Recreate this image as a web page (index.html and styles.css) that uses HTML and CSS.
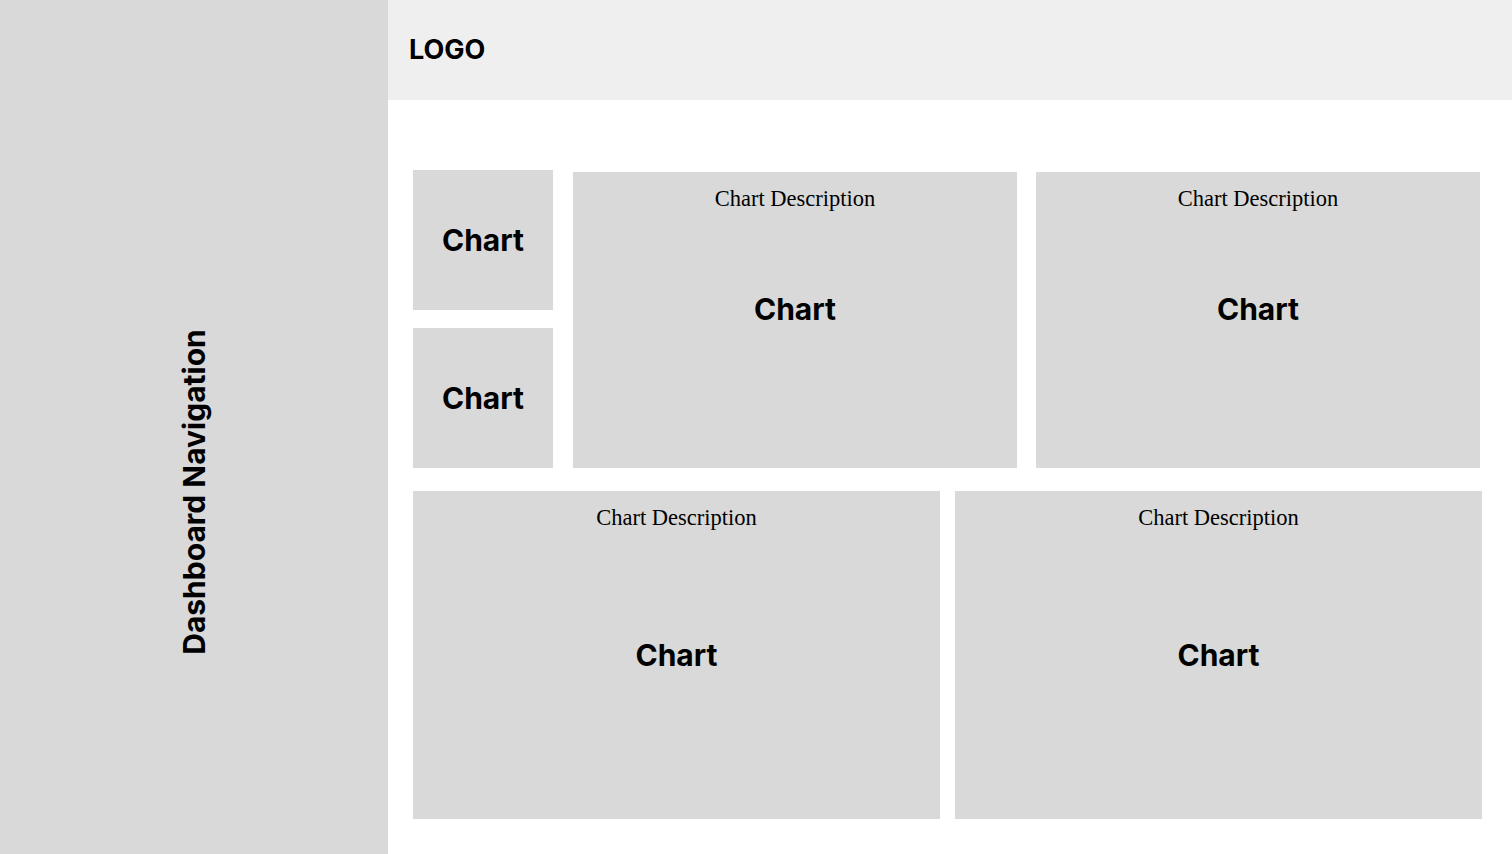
FILE: index.html
```html
<!DOCTYPE html>
<html lang="en">
<head>
    <meta charset="UTF-8">
    <meta name="viewport" content="width=device-width, initial-scale=1.0">
    <title>Dashboard</title>
    <link rel="stylesheet" href="styles.css">
</head>
<body>
    <div class="page">
        <aside class="sidebar">
            <span class="nav-label">Dashboard Navigation</span>
        </aside>
        <div class="main">
            <header class="topbar">
                <div class="logo">LOGO</div>
            </header>
            <section class="content">
                <div class="row-top">
                    <div class="small-col">
                        <div class="card card-small"><span class="chart-label">Chart</span></div>
                        <div class="card card-small"><span class="chart-label">Chart</span></div>
                    </div>
                    <div class="card card-wide card-lift">
                        <span class="chart-desc">Chart Description</span>
                        <span class="chart-label">Chart</span>
                    </div>
                    <div class="card card-wide card-lift card-gap">
                        <span class="chart-desc">Chart Description</span>
                        <span class="chart-label">Chart</span>
                    </div>
                </div>
                <div class="row-bottom">
                    <div class="card card-half">
                        <span class="chart-desc">Chart Description</span>
                        <span class="chart-label">Chart</span>
                    </div>
                    <div class="card card-half">
                        <span class="chart-desc">Chart Description</span>
                        <span class="chart-label">Chart</span>
                    </div>
                </div>
            </section>
        </div>
    </div>
</body>
</html>
```

FILE: styles.css
```css
body {
    margin: 0;
    font-family: Inter, "Liberation Sans", sans-serif;
    color: #000;
    background: #fff;
}
.page {
    display: flex;
    height: 854px;
    overflow: hidden;
}
.sidebar {
    width: 388px;
    flex-shrink: 0;
    background-color: #d9d9d9;
    display: flex;
    align-items: center;
    justify-content: center;
    padding-top: 130px;
    box-sizing: border-box;
}
.nav-label {
    display: block;
    transform: rotate(-90deg);
    white-space: nowrap;
    font-weight: 700;
    font-size: 30px;
}
.main {
    flex: 1;
    display: flex;
    flex-direction: column;
}
.topbar {
    height: 100px;
    background-color: #efefef;
    display: flex;
    align-items: center;
    padding-left: 21px;
}
.logo {
    font-weight: 700;
    font-size: 27px;
    margin-top: -1px;
}
.content {
    padding: 70px 0 0 25px;
    display: flex;
    flex-direction: column;
    gap: 23px;
}
.row-top {
    display: flex;
    align-items: flex-start;
}
.small-col {
    display: flex;
    flex-direction: column;
    gap: 18px;
    margin-right: 20px;
}
.row-bottom {
    display: flex;
    gap: 15px;
}
.card {
    background-color: #d9d9d9;
    display: grid;
    place-items: center;
}
.card > * {
    grid-area: 1 / 1;
}
.card-small {
    width: 140px;
    height: 140px;
}
.card-wide {
    width: 444px;
    height: 296px;
    margin-top: 2px;
}
.card-gap {
    margin-left: 19px;
}
.card-lift {
    padding-bottom: 22px;
    box-sizing: border-box;
}
.card-half {
    width: 527px;
    height: 328px;
}
.chart-label {
    font-weight: 700;
    font-size: 30px;
}
.chart-desc {
    align-self: start;
    padding-top: 14px;
    font-family: "Liberation Serif", serif;
    font-size: 22.5px;
}
```
